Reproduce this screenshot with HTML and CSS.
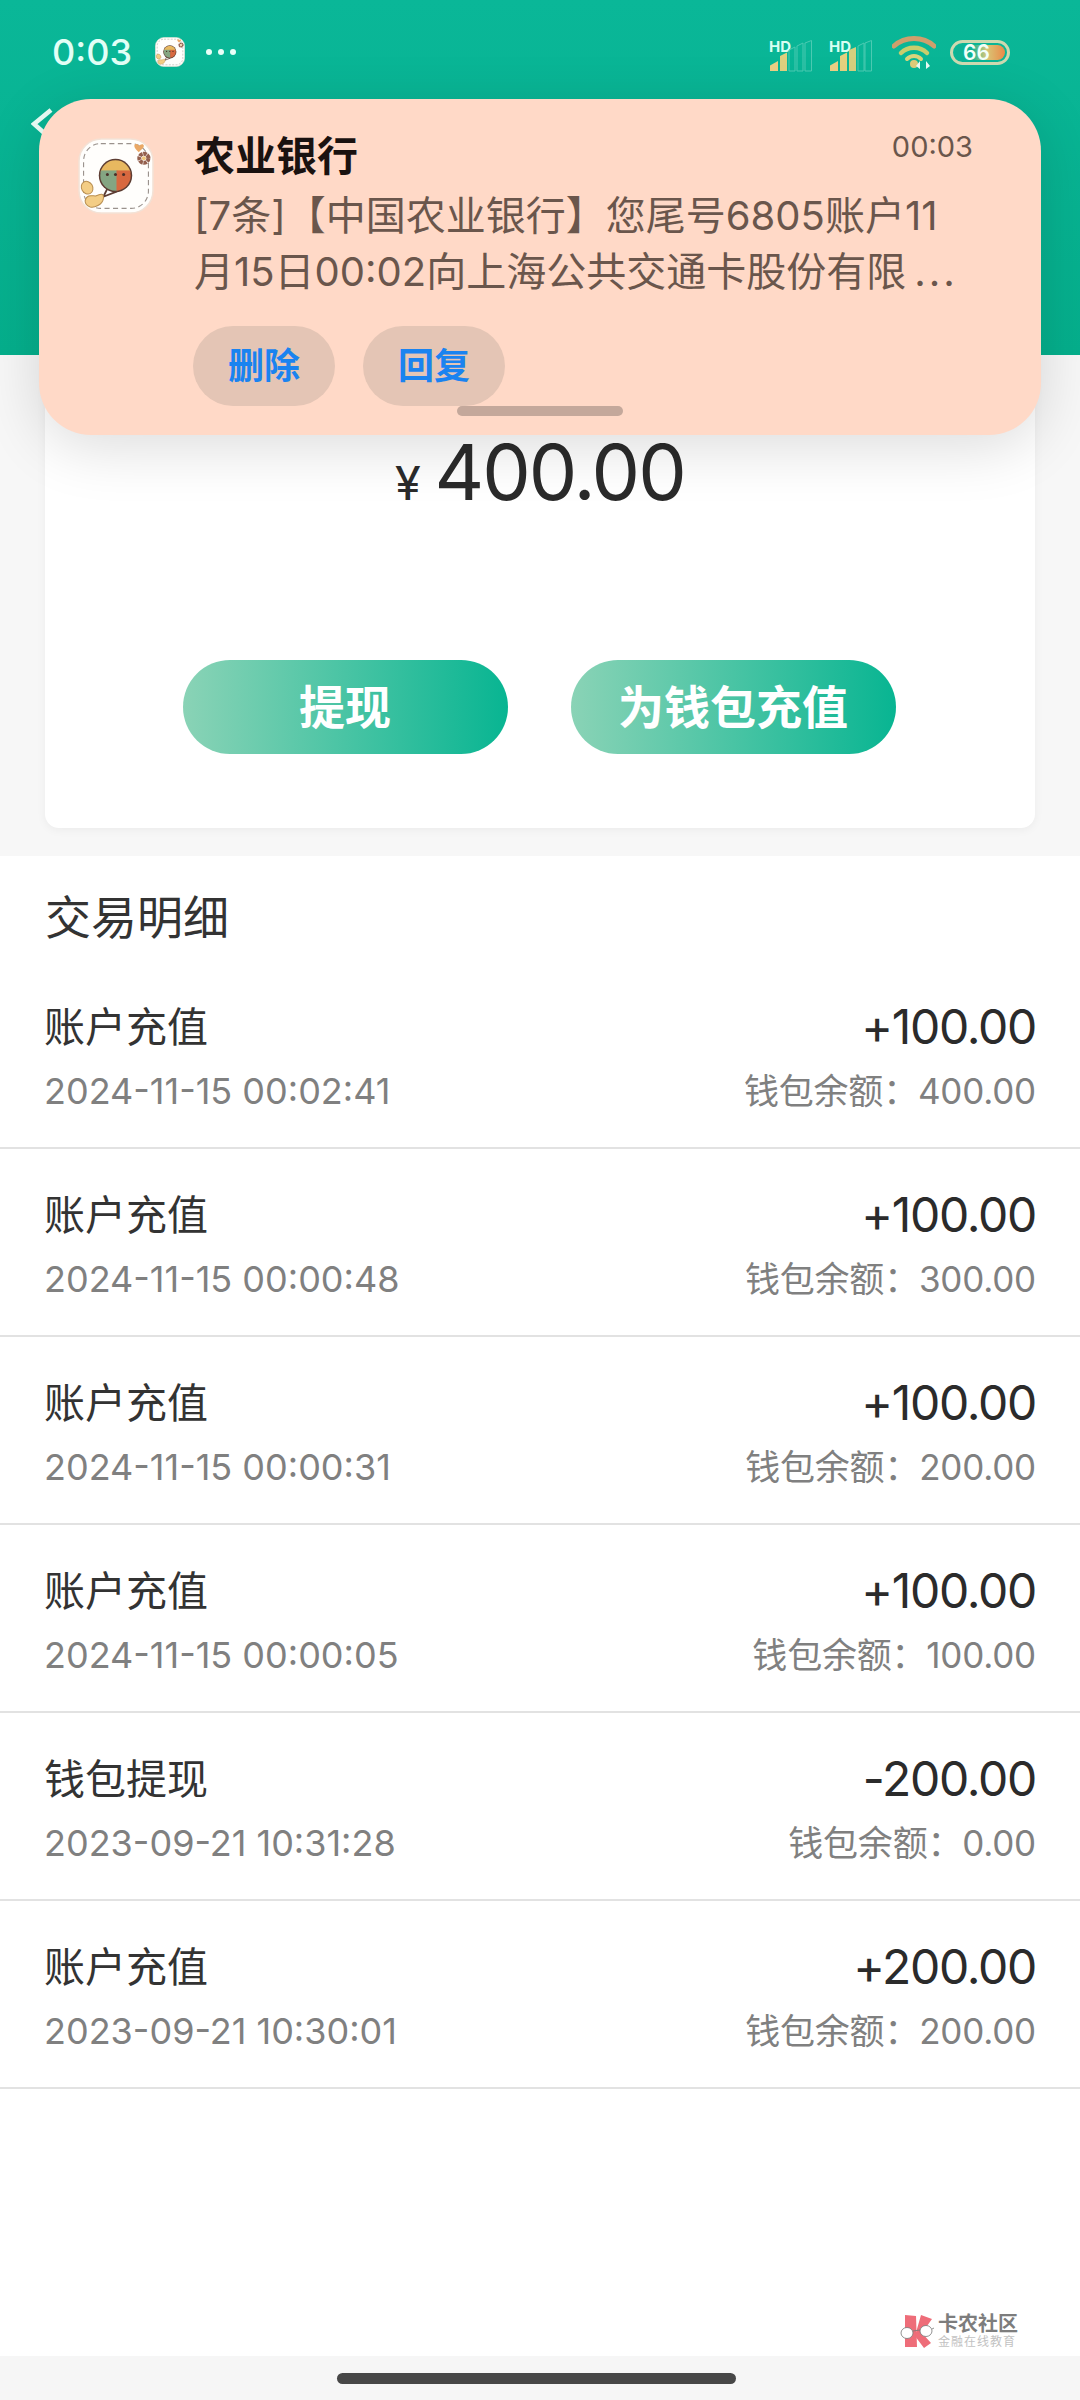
FILE: index.html
```html
<!DOCTYPE html>
<html lang="zh-CN">
<head>
<meta charset="utf-8">
<title>钱包</title>
<link rel="stylesheet" href="styles.css">
</head>
<body>
<svg class="defs" width="0" height="0" aria-hidden="true">
  <defs>
    <clipPath id="bubbleClip"><circle cx="37" cy="37" r="15"/></clipPath>
    <symbol id="appIcon" viewBox="0 0 75 75">
      <rect x="1" y="1" width="73" height="73" rx="22" fill="#fffefc" stroke="#f3e2d6" stroke-width="1.500"/>
      <rect x="5.500" y="5.500" width="64" height="64" rx="17" fill="none" stroke="#9a928d" stroke-width="1.100" stroke-dasharray="5 3.400"/>
      <path d="M29 50 L25 58 L38 53 Z" fill="#fff" stroke="#5d3d33" stroke-width="1.800" stroke-linejoin="round"/>
      <circle cx="37" cy="37" r="16.500" fill="#5d3d33"/>
      <g clip-path="url(#bubbleClip)">
        <rect x="20" y="20" width="34" height="14" fill="#e8b860"/>
        <rect x="20" y="32" width="19" height="22" fill="#84a582"/>
        <rect x="38" y="32" width="16" height="22" fill="#d8683f"/>
      </g>
      <circle cx="29" cy="36" r="1.500" fill="#4a2f28"/>
      <circle cx="37" cy="36" r="1.500" fill="#4a2f28"/>
      <circle cx="45" cy="36" r="1.500" fill="#4a2f28"/>
      <circle cx="65" cy="20" r="4.500" fill="none" stroke="#94604e" stroke-width="4" stroke-dasharray="3.400 .6"/>
      <circle cx="65" cy="20" r="2" fill="#f0c77c"/>
      <path d="M60 14 C54 9 55 5 58 6 C59 6.500 60 7 60.500 8 C61 6 65 5 65 8 C65 10 62 12 60 14 Z" fill="#eaa866"/>
      <ellipse cx="9" cy="49" rx="5.500" ry="6.500" fill="#f3cd85" stroke="#b98e4f" transform="rotate(-30 9 49)"/>
      <path d="M7 62 C9 54 16 58 18 57 C22 55 26 54 25 60 C24 66 16 69 12 68 C9 67 7 65 7 62 Z" fill="#f3cd85" stroke="#b98e4f"/>
    </symbol>
    <symbol id="wifi" viewBox="0 0 44 34">
      <path d="M2 11 C13 1 31 1 42 11" fill="none" stroke="#cf9f6c" stroke-width="5" stroke-linecap="round"/>
      <path d="M9 18 C16 11 28 11 35 18" fill="none" stroke="#c8cd6c" stroke-width="4.500" stroke-linecap="round"/>
      <path d="M15 24 C19 20 25 20 29 24" fill="none" stroke="#d9d47c" stroke-width="4" stroke-linecap="round"/>
      <circle cx="22" cy="29" r="4" fill="#dfcb78"/>
      <path d="M31 33 V25 L27 30 Z M37 33 V25 L41 30 Z" fill="#e9fbf4" transform="translate(-3 1)"/>
    </symbol>
  </defs>
</svg>

<div class="page">
  <header class="header">
    <div class="status">
      <div class="status-left">
        <span class="clock">0:03</span>
        <svg class="status-app"><use href="#appIcon"/></svg>
        <span class="more"><i></i><i></i><i></i></span>
      </div>
      <div class="status-right">
        <svg class="signal" viewBox="0 -4 44 36">
          <text x="0" y="12" class="hd">HD</text>
          <path d="M1 25.500 L9 21 V31 H1 Z" fill="#ecd085"/>
          <path d="M11 16 L18 12.500 V31 H11 Z" fill="#dfd07f"/>
          <path d="M20 10 L26 7 V31 H20 Z" class="bar-off"/>
          <path d="M28 6 L34 3 V31 H28 Z" class="bar-off"/>
          <path d="M36 3 L42.500 .5 V31 H36 Z" class="bar-off"/>
        </svg>
        <svg class="signal" viewBox="0 -4 44 36">
          <text x="0" y="12" class="hd">HD</text>
          <path d="M1 25.500 L9 21 V31 H1 Z" fill="#ecd085"/>
          <path d="M11 16 L18 12.500 V31 H11 Z" fill="#e4d17f"/>
          <path d="M20 10 L27 7 V31 H20 Z" fill="#d6cf7e"/>
          <path d="M29 6 L35 3 V31 H29 Z" class="bar-off"/>
          <path d="M36 3 L42.500 .5 V31 H36 Z" class="bar-off"/>
        </svg>
        <svg class="wifi"><use href="#wifi"/></svg>
        <svg class="battery" viewBox="0 0 60 25">
          <defs>
            <linearGradient id="batt" x1="0" x2="1" y1="0" y2="0">
              <stop offset="0" stop-color="#0cb294"/>
              <stop offset=".35" stop-color="#0fb294"/>
              <stop offset=".62" stop-color="#d8c878"/>
              <stop offset="1" stop-color="#ea8a48"/>
            </linearGradient>
          </defs>
          <rect x="1.500" y="1.500" width="57" height="22" rx="11" fill="none" stroke="#cdd9b0" stroke-width="3"/>
          <rect x="5" y="5" width="50" height="15" rx="7.500" fill="url(#batt)"/>
          <text x="13" y="20" class="batt-text">66</text>
        </svg>
      </div>
    </div>
    <svg class="back" viewBox="0 0 22 34"><path d="M20 2 L3 16 L20 31" fill="none" stroke="#eafff8" stroke-width="4.500"/></svg>
  </header>

  <section class="wallet">
    <div class="card">
      <div class="balance"><span class="yen">¥</span><span class="amount-big">400.00</span></div>
      <div class="actions">
        <a class="action">提现</a>
        <a class="action">为钱包充值</a>
      </div>
    </div>
  </section>

  <main class="list">
    <h2 class="list-title">交易明细</h2>
    <div class="row">
      <div class="col"><div class="name">账户充值</div><div class="sub">2024-11-15 00:02:41</div></div>
      <div class="col col-right"><div class="money">+100.00</div><div class="sub sub-right">钱包余额：400.00</div></div>
    </div>
    <div class="row">
      <div class="col"><div class="name">账户充值</div><div class="sub">2024-11-15 00:00:48</div></div>
      <div class="col col-right"><div class="money">+100.00</div><div class="sub sub-right">钱包余额：300.00</div></div>
    </div>
    <div class="row">
      <div class="col"><div class="name">账户充值</div><div class="sub">2024-11-15 00:00:31</div></div>
      <div class="col col-right"><div class="money">+100.00</div><div class="sub sub-right">钱包余额：200.00</div></div>
    </div>
    <div class="row">
      <div class="col"><div class="name">账户充值</div><div class="sub">2024-11-15 00:00:05</div></div>
      <div class="col col-right"><div class="money">+100.00</div><div class="sub sub-right">钱包余额：100.00</div></div>
    </div>
    <div class="row">
      <div class="col"><div class="name">钱包提现</div><div class="sub">2023-09-21 10:31:28</div></div>
      <div class="col col-right"><div class="money">-200.00</div><div class="sub sub-right">钱包余额：0.00</div></div>
    </div>
    <div class="row">
      <div class="col"><div class="name">账户充值</div><div class="sub">2023-09-21 10:30:01</div></div>
      <div class="col col-right"><div class="money">+200.00</div><div class="sub sub-right">钱包余额：200.00</div></div>
    </div>

    <div class="watermark">
      <svg class="wm-logo" viewBox="0 0 34 34">
        <path d="M5 1 L16 2 L17 33 L5 33 Z" fill="#ee6d79"/>
        <path d="M21 1 L32 5 L22 19 L31 29 L24 34 L15 22 Z" fill="#ee6d79"/>
        <ellipse cx="7" cy="19" rx="6" ry="5.500" fill="#fff" stroke="#777" stroke-width=".8"/>
        <ellipse cx="26" cy="17" rx="6" ry="5.500" fill="#fff" stroke="#777" stroke-width=".8"/>
        <path d="M13 17 L20 16 M32 15 L34 14" stroke="#777" stroke-width=".8" fill="none"/>
      </svg>
      <div class="wm-text">
        <span class="wm-main">卡农社区</span>
        <span class="wm-sub">金融在线教育</span>
      </div>
    </div>
  </main>

  <footer class="nav"><span class="home"></span></footer>

  <aside class="notice">
    <svg class="notice-icon"><use href="#appIcon"/></svg>
    <div class="notice-body">
      <div class="notice-top">
        <span class="notice-title">农业银行</span>
        <span class="notice-time">00:03</span>
      </div>
      <div class="notice-line">[7条]【中国农业银行】您尾号6805账户11</div>
      <div class="notice-line">月15日00:02向上海公共交通卡股份有限<span class="dots">...</span></div>
      <div class="notice-actions">
        <a class="pill">删除</a>
        <a class="pill">回复</a>
      </div>
    </div>
    <span class="handle"></span>
  </aside>
</div>
</body>
</html>
```
FILE: styles.css
```css
* { box-sizing: border-box; }
html, body { margin: 0; padding: 0; }
body {
  font-family: Inter, "Noto Sans CJK SC", sans-serif;
  background: #f7f7f7;
}
.defs { position: absolute; }
.page {
  position: relative;
  width: 1080px;
  height: 2400px;
  display: flex;
  flex-direction: column;
  overflow: hidden;
}

/* header */
.header {
  height: 355px;
  flex: none;
  background: linear-gradient(180deg, #0ab798, #05af8c);
}
.status {
  height: 56px;
  margin-top: 24px;
  padding: 0 70px 0 52px;
  display: flex;
  justify-content: space-between;
  align-items: center;
}
.status-left { display: flex; align-items: center; }
.clock { font-size: 36px; line-height: 56px; color: #e2fff6; font-weight: 500; }
.status-app { width: 30px; height: 30px; margin-left: 23px; }
.more { display: flex; gap: 6px; margin-left: 21px; }
.more i { width: 6px; height: 6px; border-radius: 50%; background: #e8fff8; }
.status-right { display: flex; align-items: center; }
.signal { width: 44px; height: 36px; margin: 4px 16px 0 0; }
.signal + .signal { margin-right: 19px; }
.hd { font: 700 15px Inter, sans-serif; fill: #d8fff2; }
.bar-off { fill: none; stroke: #4ccab2; stroke-width: 1; }
.wifi { width: 44px; height: 34px; margin-right: 14px; }
.battery { width: 60px; height: 25px; }
.batt-text { font: 600 21px Inter, sans-serif; fill: #f2fff8; }
.back { display: block; width: 22px; height: 34px; margin: 28px 0 0 31px; }

/* wallet card */
.wallet { flex: none; height: 501px; padding: 0 45px; }
.card {
  height: 473px;
  background: #fff;
  border-radius: 0 0 14px 14px;
  box-shadow: 0 2px 10px rgba(0, 0, 0, .05);
  padding-top: 72px;
}
.balance {
  display: flex;
  justify-content: center;
  align-items: baseline;
  gap: 14px;
  height: 90px;
  color: #2b2b2b;
}
.yen { font-family: Roboto, sans-serif; font-size: 48px; line-height: 90px; }
.amount-big { font-size: 77px; line-height: 90px; letter-spacing: -2px; }
.actions {
  display: flex;
  justify-content: center;
  gap: 63px;
  margin: 143px 2px 0 0;
}
.action {
  width: 325px;
  height: 94px;
  border-radius: 47px;
  background: linear-gradient(90deg, #8ad3b6, #08b592);
  color: #fff;
  font-size: 46px;
  font-weight: 700;
  line-height: 94px;
  text-align: center;
}

/* list */
.list {
  flex: 1;
  position: relative;
  background: #fff;
}
.list-title {
  margin: 0;
  height: 105px;
  padding: 31px 45px 0;
  font-size: 46px;
  line-height: 60px;
  font-weight: 400;
  color: #333;
}
.row {
  height: 188px;
  padding: 39px 44px 0;
  border-bottom: 2px solid #e2e2e2;
  display: flex;
  justify-content: space-between;
}
.col { display: flex; flex-direction: column; gap: 10px; }
.col-right { align-items: flex-end; }
.name { font-size: 41px; line-height: 54px; color: #333; }
.money { font-size: 48px; line-height: 54px; letter-spacing: -1.300px; color: #2b2b2b; }
.sub { font-size: 36px; line-height: 54px; color: #808080; }
.sub-right { font-size: 35px; letter-spacing: -.2px; }

.watermark {
  position: absolute;
  right: 62px;
  bottom: 8px;
  display: flex;
  align-items: center;
  gap: 4px;
}
.wm-logo { width: 34px; height: 34px; }
.wm-text { display: flex; flex-direction: column; }
.wm-main { font-size: 20px; line-height: 22px; font-weight: 700; color: #7d7d7d; }
.wm-sub { font-size: 12px; line-height: 13px; letter-spacing: 1px; color: #c2c2c2; }

/* bottom nav */
.nav {
  flex: none;
  height: 44px;
  background: #f6f6f6;
  padding: 17px 0 0 337px;
}
.home {
  display: block;
  width: 399px;
  height: 11px;
  border-radius: 6px;
  background: #474747;
}

/* notification overlay */
.notice {
  position: absolute;
  top: 99px;
  left: 39px;
  width: 1002px;
  height: 336px;
  background: #ffd9c7;
  border-radius: 52px;
  box-shadow: 0 12px 60px rgba(0, 0, 0, .14);
  display: flex;
  padding: 29px 68px 0 39px;
}
.notice-icon { width: 76px; height: 76px; margin-top: 10px; flex: none; }
.notice-body { margin-left: 40px; flex: 1; }
.notice-top {
  display: flex;
  justify-content: space-between;
  height: 60px;
}
.notice-title { font-size: 41px; line-height: 56px; font-weight: 700; color: #1a1210; }
.notice-time { font-size: 29px; line-height: 38px; color: #6a564c; }
.notice-line {
  font-size: 40px;
  line-height: 56px;
  color: #6a564c;
  white-space: nowrap;
}
.dots { letter-spacing: 3px; margin-left: 8px; }
.notice-actions { display: flex; gap: 28px; margin-top: 26px; margin-left: -1px; }
.pill {
  width: 142px;
  height: 80px;
  border-radius: 40px;
  background: #e4c5b5;
  color: #1a83f0;
  font-size: 36px;
  font-weight: 700;
  line-height: 80px;
  text-align: center;
}
.handle {
  position: absolute;
  top: 307px;
  left: 418px;
  width: 166px;
  height: 10px;
  border-radius: 5px;
  background: #c4a89b;
}
```
